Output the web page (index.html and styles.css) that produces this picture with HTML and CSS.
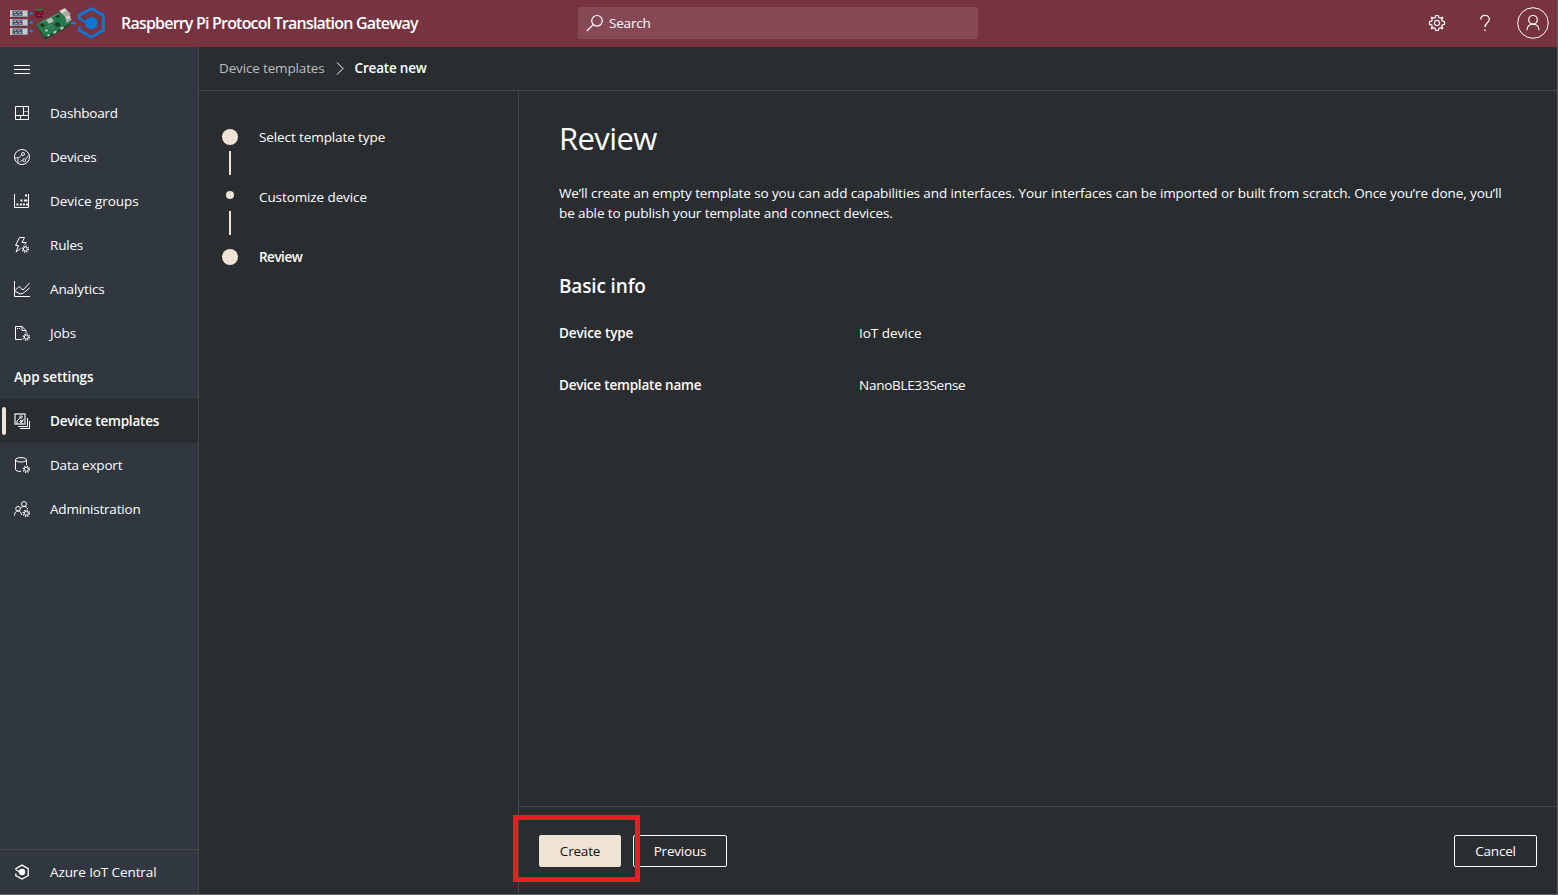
FILE: index.html
```html
<!DOCTYPE html>
<html lang="en">
<head>
<meta charset="utf-8">
<title>Raspberry Pi Protocol Translation Gateway</title>
<link rel="stylesheet" href="styles.css">
</head>
<body>
<svg class="defs" width="0" height="0" aria-hidden="true">
  <defs>
    <g id="cog" fill="none" stroke="currentColor">
      <circle r="2" stroke-width="1"/>
      <circle r="3.100" stroke-width="1.300" stroke-dasharray="1.200 1.235"/>
    </g>
  </defs>
</svg>
<div class="app">
  <header class="topbar">
    <svg class="logo" width="98" height="34" viewBox="0 0 98 34">
      <path d="M2 4h17v7H2zM2 13h17v7H2zM2 22h17v7H2z" fill="#8d93a3"/>
      <path d="M4 5.500h9v4H4zM4 14.500h9v4H4zM4 23.500h9v4H4z" fill="#4d5468"/>
      <path d="M5 6.500h2M9 6.500h2M6 8.500h2M10 8.500h2M5 15.500h2M9 15.500h2M6 17.500h2M10 17.500h2M5 24.500h2M9 24.500h2M6 26.500h2M10 26.500h2" stroke="#a7adba"/>
      <path d="M1 4h2v7H1zM14 5h4v5h-4zM1 13h2v7H1zM14 14h4v5h-4zM1 22h2v7H1zM14 23h4v5h-4z" fill="#c6c8cd"/>
      <path d="M20 7.500h4M20 16.500h4M20 25h4M62 17h5" stroke="#0a86dc" stroke-width="1.400"/>
      <path d="M22.500 6v3M22.500 15v3M22.500 23.500v3M65 15v4" stroke="#0a86dc"/>
      <circle cx="30.300" cy="8.200" r="4" fill="#5c0c22"/>
      <path d="M27 2l3.300 1.500L33.500 2 33 4.500l-2.700 1-2.700-1z" fill="#257a33"/>
      <path d="M28.500 6h1.500v1.500h-1.500zM31 6h1.500v1.500H31zM29.500 8.200h1.800v1.800h-1.800zM27.200 8.500h1.300V10h-1.300zM32.500 8.500h1.300V10h-1.300zM29.500 10.800h1.800v1h-1.800z" fill="#cf1745"/>
      <path d="M27 18l24-12 11 11-26 15z" fill="#25794a"/>
      <path d="M26 18.500l10 12.500 26-14v2L36 34z" fill="#1d4b34"/>
      <path d="M50 5l6-3 6 6-5.500 3.500zM56 11l5-2 1.500 5-5 3z" fill="#aaa9a4"/>
      <path d="M51 4.800l4.500-2.200 2 2-4.500 2.600zM57 11l3.500-1.500.5 2-3 1.500z" fill="#deddd7"/>
      <path d="M37 14l5-2.500 3 3.500-5 2.800z" fill="#b9c1bc"/>
      <path d="M45 18l4-2 3 3-4 2zM31 18.500l3-1.500 2 3-3 1.200zM46 10l3-1.500 2 2-3 1.500z" fill="#17382a"/>
      <path d="M36 24l2-1 1 2-2 1zM51 22l3-1.500 1 1.500-3 2zM44 26l3-1.500 1 1.500-3 2zM38 29l2-1 1 1.500-2 1z" fill="#c1cbc1"/>
      <path d="M32 16.500L50 7.500M38 21l5-2.500M41 23l4-2" stroke="#72a883" stroke-width=".7"/>
      <path d="M70.300 13V9.200L82.500 2.600l11.800 6.800v14.800l-11.800 6.900-12.200-6.900v-3.600" fill="none" stroke="#0b78d8" stroke-width="2.800"/>
      <path d="M69.500 12l7.300 4.200" stroke="#0b78d8" stroke-width="2.400"/>
      <path d="M82.500 10.500l5.800 3.300v6.600l-5.800 3.300-5.800-3.300v-6.600z" fill="#0b78d8"/>
    </svg>
    <span class="app-name">Raspberry Pi Protocol Translation Gateway</span>
    <div class="search">
      <svg width="18" height="18" viewBox="0 0 18 18" fill="none" stroke="currentColor" stroke-width="1.200"><circle cx="11" cy="6.800" r="5.300"/><path d="M7.200 10.600L.8 17"/></svg>
      <span>Search</span>
    </div>
    <div class="tools">
      <svg class="gear" width="18" height="18" viewBox="-9 -9 18 18" fill="none" stroke="currentColor" stroke-width="1.200" stroke-linejoin="round"><path d="M-1.300 -7.500H1.300L1.800 -5.400 3.400 -4.700 5.200 -5.800 5.800 -5.200 4.700 -3.400 5.400 -1.800 7.500 -1.300V1.300L5.400 1.800 4.700 3.400 5.800 5.200 5.200 5.800 3.400 4.700 1.800 5.400 1.300 7.500H-1.300L-1.800 5.400 -3.400 4.700 -5.200 5.800 -5.800 5.200 -4.700 3.400 -5.400 1.800 -7.500 1.300V-1.300L-5.400 -1.800 -4.700 -3.400 -5.800 -5.200 -5.200 -5.800 -3.400 -4.700 -1.800 -5.400Z"/><circle r="2.600"/></svg>
      <svg class="help" width="12" height="18" viewBox="0 0 12 18" fill="none" stroke="currentColor" stroke-width="1.200"><path d="M1.700 5.500C1.700 2.800 3.500 1.300 6 1.300s4.300 1.500 4.300 3.900c0 3.300-4.300 3.900-4.300 7.900"/><path d="M5.300 16.200h1.400" stroke-width="1.500"/></svg>
      <svg class="user" width="32" height="32" viewBox="0 0 32 32" fill="none" stroke="currentColor"><circle cx="16" cy="16" r="15.300"/><g stroke-width="1.200"><circle cx="16" cy="12.800" r="4.300"/><path d="M10 23.200c0-3.700 2.600-6.100 6-6.100s6 2.400 6 6.100"/></g></svg>
    </div>
  </header>
  <div class="body">
    <nav class="sidebar">
      <div class="item"><svg viewBox="0 0 16 16"><path d="M0 4.500h16M0 8.500h16M0 12.500h16"/></svg></div>
      <a class="item"><svg viewBox="0 0 16 16"><path d="M1.500 1.500h13v13h-13zM9.500 1.500v9M1.500 10.500h13M6.500 10.500v4"/><path d="M9.500 6.500h5" opacity=".6"/></svg><span>Dashboard</span></a>
      <a class="item"><svg viewBox="0 0 16 16"><circle cx="8" cy="8" r="7.500"/><g stroke-width=".9"><path d="M4 14V9.500L7.800 6M.8 9.500L4 8.500M6.500 12.500L9 11M11.700 10l3-3.500"/><circle cx="9" cy="5" r="1.500"/><circle cx="10.400" cy="11.200" r="1.500"/></g></svg><span>Devices</span></a>
      <a class="item"><svg viewBox="0 0 16 16"><path d="M.5 1v13.500h14V1"/><path d="M2.500 11.500h2M6 11.500h2M9 11.500h2M12 11.500h2M6.500 7.500h2M10 7.500h2M12 7.500h1.500M11 2.500h2" stroke-width="1.800"/></svg><span class="looser">Device groups</span></a>
      <a class="item"><svg viewBox="0 0 16 16"><path d="M5.500.5h5L8 5.500h4.500l-2 2M5.500.5L1.500 8.500h3L2 15l4.500-3.500"/><use href="#cog" x="11.300" y="12"/></svg><span>Rules</span></a>
      <a class="item"><svg viewBox="0 0 16 16"><path d="M.5 0v15.500H16M1 9.500l4-4 4 3.500 6.500-7M1 10l5 3 3.500-1L15.500 7"/></svg><span class="loose">Analytics</span></a>
      <a class="item"><svg viewBox="0 0 16 16"><path d="M8 14.500H1.500V1.500H8l4 4V8M8 1.500v4h4"/><path d="M3 3.500h4" stroke-dasharray="1 1"/><use href="#cog" x="12.300" y="12"/></svg><span class="loose">Jobs</span></a>
      <div class="section"><span class="loose">App settings</span></div>
      <a class="item active"><svg viewBox="0 0 16 16"><path d="M1 1h10v10H1z" stroke-width="1.400" opacity=".8"/><path d="M3 11V8l3-3M6 9.500l4-3M4 13.500h9.500V5M6 15.500h9.500V8"/><circle cx="7" cy="4" r="1.200"/><circle cx="7.200" cy="8.500" r="1.200"/></svg><span>Device templates</span></a>
      <a class="item"><svg viewBox="0 0 16 16"><ellipse cx="7" cy="2.800" rx="5.500" ry="2.200"/><path d="M1.500 2.800v9.500c0 1.200 2 2.200 5.500 2.200M12.500 2.800V8"/><use href="#cog" x="12.300" y="12.300"/></svg><span>Data export</span></a>
      <a class="item"><svg viewBox="0 0 16 16"><circle cx="10" cy="3" r="2.500"/><circle cx="4" cy="7.700" r="2.300"/><path d="M.5 14.500C.5 11.500 2 10 4 10s3.300 1.500 3.600 4M6.300 7.500C7 6.200 8.300 5.500 10 5.500c1.800 0 3.200.9 3.800 2.500"/><use href="#cog" x="12.300" y="12.300"/></svg><span>Administration</span></a>
      <a class="item central"><svg viewBox="0 0 16 16"><path d="M1.800 5V4.600L8 1.100l6.200 3.500v7L8 15.100l-6.200-3.500V9.500M1.500 5.500L5 7.500" stroke-width="1.300"/><circle cx="8" cy="8" r="3.200" fill="currentColor" stroke="none"/></svg><span class="loose">Azure IoT Central</span></a>
    </nav>
    <div class="content">
      <div class="crumbs"><span>Device templates</span><svg width="8" height="13" viewBox="0 0 8 13" fill="none" stroke="currentColor"><path d="M1 .5l6 6-6 6"/></svg><b>Create new</b></div>
      <div class="wizard">
        <ol class="steps">
          <li><i class="dot"></i><span class="loose">Select template type</span></li>
          <li class="bar"></li>
          <li><i class="dot small"></i><span class="loose">Customize device</span></li>
          <li class="bar"></li>
          <li><i class="dot"></i><b class="tight">Review</b></li>
        </ol>
        <section class="pane">
          <main class="review">
            <h1>Review</h1>
            <p class="loose">We’ll create an empty template so you can add capabilities and interfaces. Your interfaces can be imported or built from scratch. Once you’re done, you’ll<br>be able to publish your template and connect devices.</p>
            <h2>Basic info</h2>
            <dl>
              <dt class="loose">Device type</dt><dd class="looser">IoT device</dd>
              <dt>Device template name</dt><dd class="snug">NanoBLE33Sense</dd>
            </dl>
          </main>
          <footer class="actions">
            <button class="primary">Create</button>
            <button class="prev">Previous</button>
            <button class="cancel">Cancel</button>
            <div class="callout"></div>
          </footer>
        </section>
      </div>
    </div>
  </div>
</div>
</body>
</html>
```
FILE: styles.css
```css
* { box-sizing: border-box; }
body {
  margin: 0;
  background: #292d30;
  color: #fff;
  font: 13.5px/20px "Open Sans", "Noto Sans", sans-serif;
  letter-spacing: -0.2px;
}
.loose { letter-spacing: -0.1px; }
.looser { letter-spacing: -0.02px; }
.snug { letter-spacing: -0.26px; }
.tight { letter-spacing: -0.5px; }
.defs { position: absolute; }
.app {
  display: flex;
  flex-direction: column;
  width: 1558px;
  height: 895px;
  border-right: 1px solid #5f6264;
  border-bottom: 1px solid #5f6264;
  white-space: nowrap;
}
.topbar {
  display: flex;
  align-items: center;
  flex: none;
  height: 47px;
  padding: 0 8px 1px 9px;
  background: #773340;
}
.app-name {
  width: 457px;
  margin-left: 14px;
  font-size: 16px;
  font-weight: 600;
  letter-spacing: -0.8px;
}
.search {
  display: flex;
  align-items: center;
  gap: 5px;
  width: 400px;
  height: 32px;
  padding-left: 8px;
  border-radius: 2px;
  background: #864855;
}
.tools { display: flex; align-items: center; margin-left: auto; }
.help { margin-left: 33px; }
.user { margin-left: 26px; }
.body { display: flex; flex: 1; min-height: 0; }
.sidebar {
  display: flex;
  flex-direction: column;
  width: 199px;
  border-right: 1px solid #484644;
  background: #30373f;
}
.item, .section {
  display: flex;
  align-items: center;
  flex: none;
  height: 44px;
  padding-left: 14px;
}
.item svg {
  width: 16px;
  height: 16px;
  margin-right: 20px;
  overflow: visible;
  fill: none;
  stroke: currentColor;
  stroke-width: 1;
}
.section, .active, h2, dt, b { font-weight: 600; }
.active {
  padding-left: 10px;
  background: #292d30;
}
.active::before {
  content: "";
  width: 4px;
  height: 28px;
  margin: 0 8px 0 -8px;
  border-radius: 2px;
  background: #efe3d6;
}
.central {
  height: 45px;
  margin-top: auto;
  border-top: 1px solid #484644;
}
.content { display: flex; flex-direction: column; flex: 1; }
.crumbs {
  display: flex;
  align-items: center;
  height: 44px;
  padding: 0 20px 1px;
  border-bottom: 1px solid #484644;
}
.crumbs span { color: #bdbdbd; letter-spacing: -0.15px; }
.crumbs svg { margin: 0 11px; }
.wizard { display: flex; flex: 1; }
.steps {
  width: 320px;
  margin: 0;
  padding: 36px 0 0 23px;
  border-right: 1px solid #484644;
  list-style: none;
}
.steps li { display: flex; align-items: center; gap: 21px; height: 20px; }
.steps .bar { width: 2px; height: 24px; margin: 4px 0 12px 7px; background: #efe3d6; }
.dot { width: 16px; height: 16px; border-radius: 50%; background: #efe3d6; }
.dot.small { width: 8px; height: 8px; margin: 0 4px 4px; }
.pane { display: flex; flex-direction: column; flex: 1; }
.review { flex: 1; padding: 27px 40px 0; }
h1 { margin: 0; font-size: 31px; font-weight: 400; line-height: 40px; letter-spacing: -0.6px; }
p { margin: 25px 0 0; }
h2 { margin: 49px 0 0; font-size: 19px; line-height: 28px; letter-spacing: -0.15px; }
dl { display: grid; grid-template-columns: 300px 1fr; row-gap: 32px; margin: 23px 0 0; }
dd { margin: 0; }
.actions {
  position: relative;
  display: flex;
  height: 88px;
  padding: 28px 20px 0;
  border-top: 1px solid #484644;
}
button {
  height: 32px;
  padding: 0;
  border: 1px solid #fff;
  border-radius: 2px;
  background: none;
  color: #fff;
  font: inherit;
  letter-spacing: inherit;
}
.primary { width: 82px; border-color: #efe3d6; background: #efe3d6; color: #111; }
.prev { width: 94px; margin-left: 12px; }
.cancel { width: 83px; margin-left: auto; }
.callout {
  position: absolute;
  top: 8px;
  left: -6px;
  width: 127px;
  height: 67px;
  border: 5px solid #ed1c24;
}
```
